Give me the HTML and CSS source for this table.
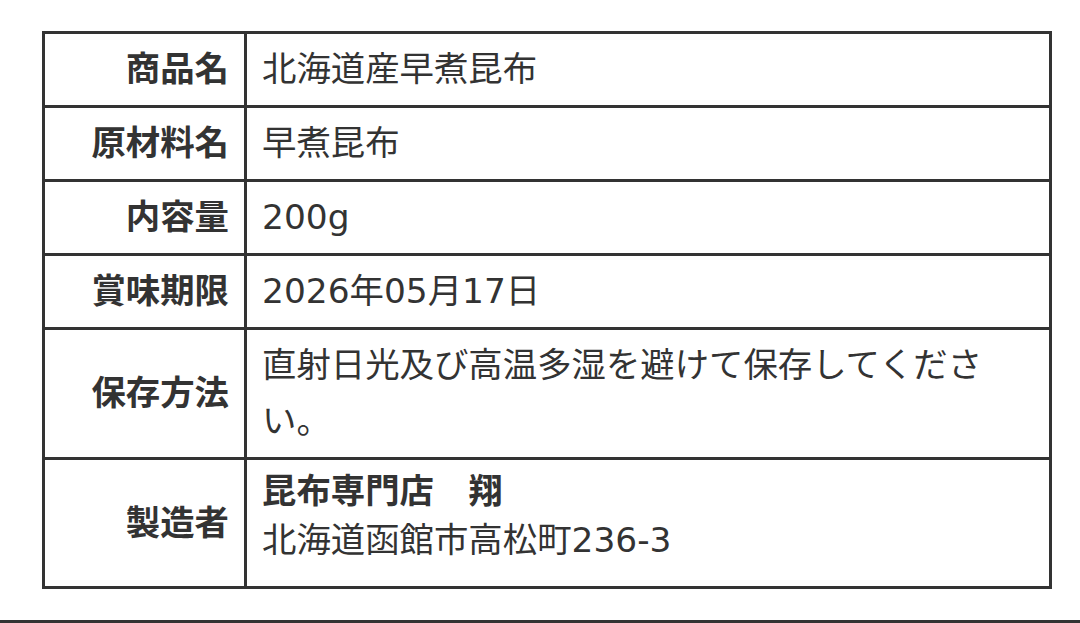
FILE: index.html
```html
<!DOCTYPE html>
<html lang="ja">
<head>
<meta charset="utf-8">
<title>商品情報</title>
<link rel="stylesheet" href="styles.css">
</head>
<body>
<div class="page">
  <table class="spec">
    <tr>
      <th>商品名</th>
      <td>北海道産早煮昆布</td>
    </tr>
    <tr>
      <th>原材料名</th>
      <td>早煮昆布</td>
    </tr>
    <tr>
      <th>内容量</th>
      <td>200g</td>
    </tr>
    <tr>
      <th>賞味期限</th>
      <td>2026年05月17日</td>
    </tr>
    <tr>
      <th>保存方法</th>
      <td>直射日光及び高温多湿を避けて保存してください。</td>
    </tr>
    <tr>
      <th>製造者</th>
      <td class="maker">
        <div class="maker-name">昆布専門店　翔</div>
        <div>北海道函館市高松町236-3</div>
      </td>
    </tr>
  </table>
  <div class="rule"></div>
</div>
</body>
</html>
```

FILE: styles.css
```css
html, body {
  margin: 0;
  padding: 0;
  background: #ffffff;
}

.page {
  padding: 31px 0 0 42px;
  font-family: "DejaVu Sans", "Noto Sans CJK JP", sans-serif;
  color: #333333;
}

.spec {
  width: 1010px;
  border-collapse: separate;
  border-spacing: 0;
  border-top: 3px solid #333333;
  border-left: 3px solid #333333;
  table-layout: fixed;
}

.spec th,
.spec td {
  border-right: 3px solid #333333;
  border-bottom: 3px solid #333333;
  font-size: 34.4px;
  line-height: 56px;
  padding: 7px 15px 8px 15px;
  vertical-align: middle;
}

.spec th {
  width: 169px;
  text-align: right;
  font-weight: 700;
  padding-right: 15px;
}

.spec td {
  text-align: left;
  font-weight: 400;
}

.spec td.maker {
  line-height: 49px;
  padding: 7px 15px 21px 15px;
}

.maker-name {
  font-weight: 700;
}

.rule {
  margin-left: -42px;
  margin-top: 31px;
  width: 1080px;
  height: 3px;
  background: #333333;
}
```
